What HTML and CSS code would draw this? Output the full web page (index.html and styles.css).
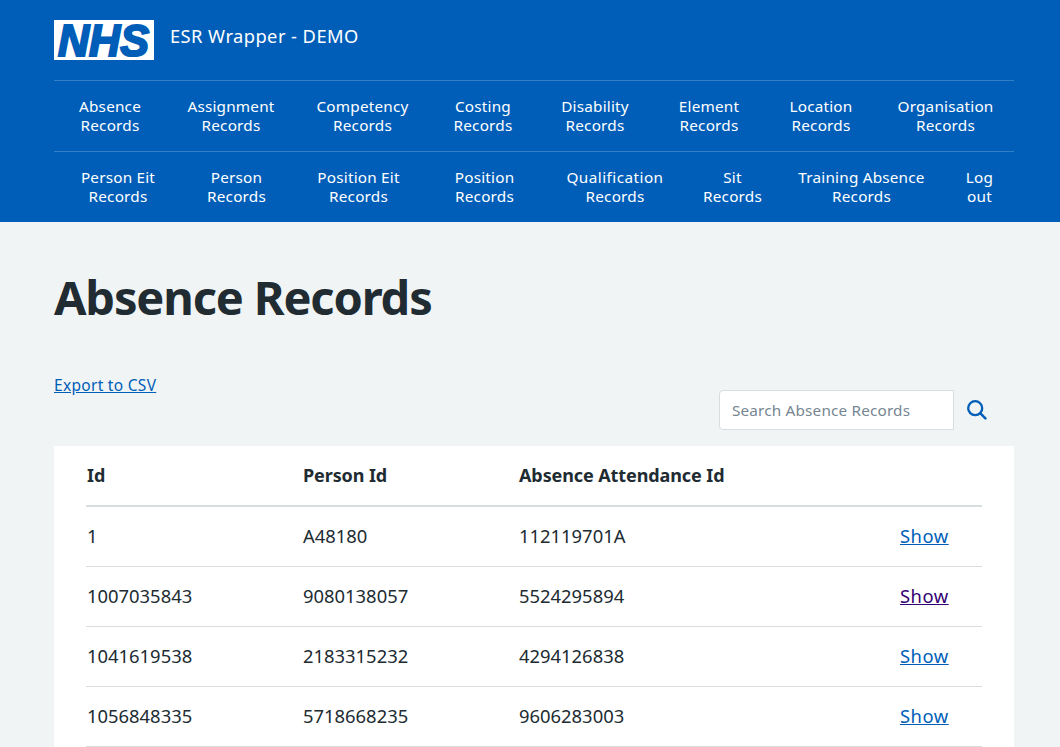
FILE: index.html
```html
<!DOCTYPE html>
<html lang="en">
<head>
<meta charset="utf-8">
<title>Absence Records</title>
<link rel="stylesheet" href="styles.css">
</head>
<body>
<header class="header">
  <div class="container">
    <div class="brand">
      <svg class="logo" viewBox="0 0 100 40" role="img" aria-label="NHS"><rect width="100" height="40" fill="#fff"/><text class="logo-text" x="4" y="35.8" textLength="91" lengthAdjust="spacingAndGlyphs">NHS</text></svg>
      <span class="service">ESR Wrapper - DEMO</span>
    </div>
    <nav>
      <ul class="nav-row nav-first">
        <li><a>Absence<br>Records</a></li><li><a>Assignment<br>Records</a></li><li><a>Competency<br>Records</a></li><li><a>Costing<br>Records</a></li><li><a>Disability<br>Records</a></li><li><a>Element<br>Records</a></li><li><a>Location<br>Records</a></li><li><a>Organisation<br>Records</a></li>
      </ul>
      <ul class="nav-row nav-second">
        <li><a>Person Eit<br>Records</a></li><li><a>Person<br>Records</a></li><li><a>Position Eit<br>Records</a></li><li><a>Position<br>Records</a></li><li><a><span class="wide">Qualification</span><br>Records</a></li><li><a>Sit<br>Records</a></li><li><a>Training Absence<br>Records</a></li><li><a>Log<br>out</a></li>
      </ul>
    </nav>
  </div>
</header>
<main class="container">
  <h1 class="title">Absence Records</h1>
  <div class="tools">
    <a class="link export">Export to CSV</a>
    <form class="search">
      <input class="search-input" type="text" placeholder="Search Absence Records">
      <svg class="search-icon" viewBox="0 0 20 20" fill="none" stroke="#005eb8" stroke-linecap="round"><circle cx="8.2" cy="8.2" r="7" stroke-width="2.3"/><path d="M13.4 13.4l5 5" stroke-width="2.5"/></svg>
    </form>
  </div>
  <section class="panel">
    <table class="records">
      <thead><tr><th class="col-id">Id</th><th class="col-person">Person Id</th><th class="col-att">Absence Attendance Id</th><th></th></tr></thead>
      <tbody>
        <tr><td>1</td><td>A48180</td><td>112119701A</td><td><a class="link show">Show</a></td></tr>
        <tr><td>1007035843</td><td>9080138057</td><td>5524295894</td><td><a class="link show visited">Show</a></td></tr>
        <tr><td>1041619538</td><td>2183315232</td><td>4294126838</td><td><a class="link show">Show</a></td></tr>
        <tr><td>1056848335</td><td>5718668235</td><td>9606283003</td><td><a class="link show">Show</a></td></tr>
      </tbody>
    </table>
  </section>
</main>
</body>
</html>
```
FILE: styles.css
```css
* { box-sizing: border-box; }
html { overflow: hidden; }
body { margin: 0; height: 747px; overflow: hidden; background: #f0f4f5; color: #212b32; font-family: "Noto Sans", "Open Sans", sans-serif; }
.container { width: 960px; margin-left: 54px; }
.header { height: 222px; background: #005eb8; color: #fff; }
.brand { display: flex; height: 80px; padding-top: 20px; gap: 16px; }
.logo { width: 100px; height: 40px; overflow: visible; }
.logo-text { font: italic bold 45px "Liberation Sans", sans-serif; fill: #005eb8; stroke: #005eb8; stroke-width: 2.2px; }
.service { font-size: 18.3px; line-height: 24px; padding-top: 4px; letter-spacing: .45px; }
.nav-row { list-style: none; margin: 0; padding: 16px 0 0; display: grid; height: 71px; border-top: 1px solid #337ec6; text-align: center; font-size: 15.3px; line-height: 19px; letter-spacing: .2px; white-space: nowrap; }
.nav-first { grid-template-columns: 112px 130px 133px 108px 116px 112px 112px 137px; }
.nav-second { grid-template-columns: 128px 109px 135px 117px 144px 91px 167px 69px; }
.wide { letter-spacing: .45px; }
.title { margin: 0; padding-top: 48px; font-size: 47px; line-height: 54px; font-weight: 700; letter-spacing: -1.15px; white-space: nowrap; }
.tools { display: flex; justify-content: space-between; align-items: flex-start; height: 122px; padding-top: 49px; }
.link { color: #005eb8; text-decoration: underline; }
.visited { color: #330072; }
.show { letter-spacing: .5px; }
.export { font-size: 15.5px; line-height: 24px; letter-spacing: .3px; }
.search { display: flex; align-items: center; gap: 13px; margin: 17px 27px 0 0; }
.search-input { width: 235px; height: 40px; border: 1px solid #d8dde0; border-radius: 4px 0 0 4px; padding: 0 12px; background: #fff; font: 15.3px "Noto Sans", sans-serif; letter-spacing: .17px; }
.search-input::placeholder { color: #768692; }
.search-icon { width: 20px; height: 20px; }
.panel { background: #fff; padding: 0 32px; height: 320px; }
.records { width: 896px; table-layout: fixed; border-collapse: separate; border-spacing: 0; font-size: 18.4px; line-height: 27px; }
.col-id, .col-person { width: 216px; }
.col-att { width: 381px; }
.records th { height: 61px; padding: 0 1px; text-align: left; border-bottom: 2px solid #d8dde0; font-size: 18px; letter-spacing: -.1px; }
.records td { height: 60px; padding: 0 1px 2px; border-bottom: 1px solid #d8dde0; }
```
